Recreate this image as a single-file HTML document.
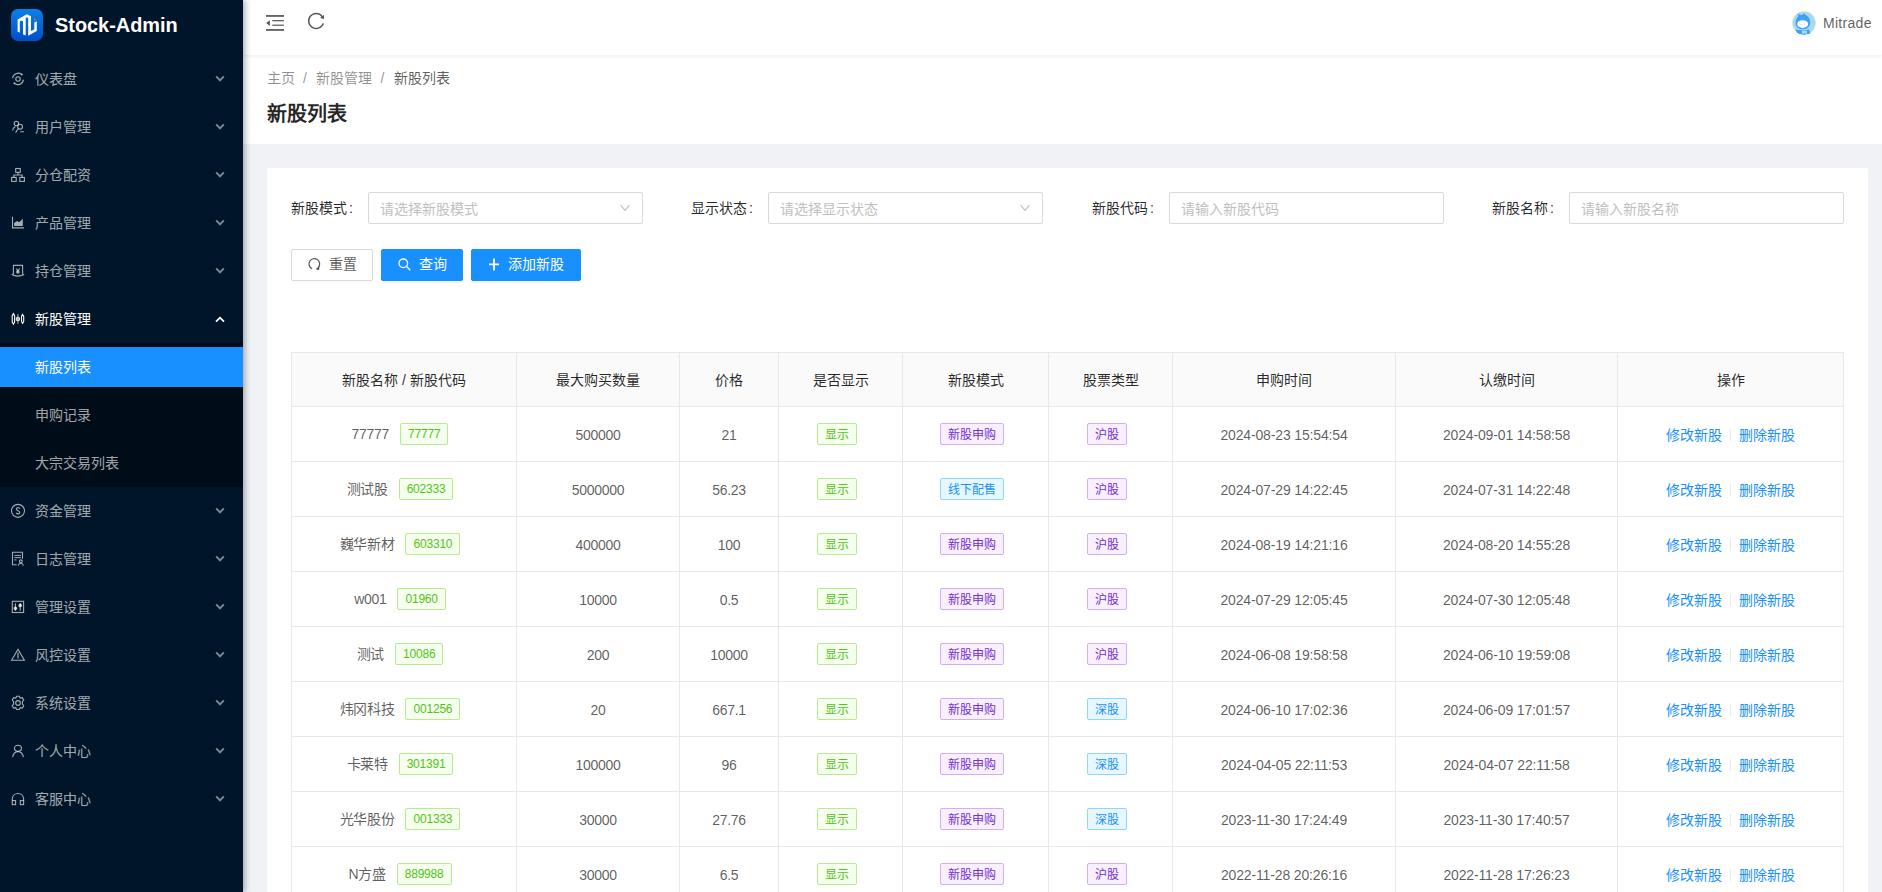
<!DOCTYPE html>
<html lang="zh-CN"><head><meta charset="utf-8"><title>新股列表</title>
<style>
*{box-sizing:border-box;margin:0;padding:0}
html,body{width:1882px;height:892px;overflow:hidden;background:#f0f2f5;font-family:"Liberation Sans",sans-serif;font-size:14px;color:rgba(0,0,0,.65)}
ul{list-style:none}
#side{position:absolute;left:0;top:0;width:243px;height:892px;background:#001529;z-index:3;box-shadow:2px 0 6px rgba(0,21,41,.35)}
.logo{position:absolute;left:11px;top:9px;width:32px;height:32px;border-radius:7px;background:linear-gradient(180deg,#0a80e8,#0050c6)}
.logo svg{position:absolute;left:0;top:0}
.brand{position:absolute;left:55px;top:13px;font-size:19.9px;font-weight:bold;color:#fff;line-height:24px}
#menu{position:absolute;left:0;top:55px;width:243px}
.mi{position:relative;height:48px;color:rgba(255,255,255,.65);line-height:48px}
.mi.open{color:#fff}
.mi .ic{position:absolute;left:8px;top:13px}
.mi .tx{position:absolute;left:35px;top:0}
.mi .arr{position:absolute;left:215px;top:20px;color:rgba(255,255,255,.5)}
.mi.open .arr{color:#fff;top:21px}
.sub{background:#000c17;padding-top:4px;height:144px}
.si{height:40px;line-height:40px;padding-left:35px;color:rgba(255,255,255,.65);margin-bottom:8px}
.si.sel{background:#1890ff;color:#fff}
#head{position:absolute;left:243px;top:0;width:1639px;height:55px;background:#fff;box-shadow:0 1px 4px rgba(0,21,41,.08);z-index:2}
#head .fold{position:absolute;left:20px;top:10px}
#head .reload{position:absolute;left:63px;top:11px}
.avatar{position:absolute;left:1549px;top:11px;width:24px;height:24px;border-radius:50%;overflow:hidden}
.uname{position:absolute;left:1580px;top:14px;font-size:14px;line-height:18px;color:rgba(0,0,0,.65);letter-spacing:.3px}
#ph{position:absolute;left:243px;top:55px;width:1639px;height:89px;background:#fff;z-index:1}
.bc{position:absolute;left:24px;top:13px;line-height:20px;color:rgba(0,0,0,.45)}
.bc .sep{margin:0 9.5px 0 8px}
.bc .last{color:rgba(0,0,0,.65)}
.ttl{position:absolute;left:24px;top:45px;font-size:20px;font-weight:bold;line-height:28px;color:rgba(0,0,0,.85)}
#card{position:absolute;left:267px;top:168px;width:1601px;height:760px;background:#fff;border-radius:2px}
.frow{position:absolute;left:0;top:24px;width:1601px;height:32px}
.fcol{position:absolute;top:0;width:400px;height:32px}
.flab{position:absolute;left:24px;top:0;line-height:32px;color:rgba(0,0,0,.85)}
.flab b{font-weight:normal;margin-left:2px}
.fin{position:absolute;left:101px;top:0;width:275px;height:32px;border:1px solid #d9d9d9;border-radius:2px;line-height:30px;padding-left:11px;padding-top:1px;color:#bfbfbf}
.fin svg{position:absolute;right:12px;top:11px}
.btns{position:absolute;left:24px;top:81px;height:32px}
.btn{position:absolute;top:0;height:32px;border-radius:2px;line-height:30px;font-size:14px}
.btn svg{position:absolute}
.btn span{position:absolute;top:-1px}
.b1{left:0;width:82px;border:1px solid #d9d9d9;color:rgba(0,0,0,.65);box-shadow:0 2px 0 rgba(0,0,0,.015)}
.b2{left:90px;width:82px;background:#1890ff;border:1px solid #1890ff;color:#fff;box-shadow:0 2px 0 rgba(0,0,0,.045)}
.b3{left:180px;width:110px;background:#1890ff;border:1px solid #1890ff;color:#fff;box-shadow:0 2px 0 rgba(0,0,0,.045)}
table{position:absolute;left:24px;top:184px;border-collapse:collapse;table-layout:fixed;width:1553px}
th,td{border:1px solid #e8e8e8;text-align:center;font-weight:normal}
th{height:54px;background:#fafafa;color:rgba(0,0,0,.85);padding-bottom:2px}
td{height:55px;color:rgba(0,0,0,.65);padding:0}
.c{display:flex;align-items:center;justify-content:center;height:54px;line-height:22px}
.c.n{padding-top:2px;letter-spacing:-.3px}
.c.t{letter-spacing:-.15px}
.c.l{padding-top:2px}
.nm{letter-spacing:-.3px}
.tag.d{letter-spacing:-.2px}
.tag.z{padding-top:1px}
.nm{margin-right:11px}
.tag{position:relative;display:inline-block;margin-right:8px;height:22px;line-height:20px;padding:0 7px;border:1px solid;border-radius:2px;font-size:12px;vertical-align:middle}
.tag.g{color:#52c41a;background:#f6ffed;border-color:#b7eb8f}
.tag.p{color:#722ed1;background:#f9f0ff;border-color:#d3adf7}
.tag.b{color:#1890ff;background:#e6f7ff;border-color:#91d5ff}
td a{color:#1890ff}
.dv{display:inline-block;width:1px;height:12px;background:#e8e8e8;margin:0 8px}
</style></head><body>
<div id="side">
 <div class="logo"><svg width="32" height="32" viewBox="0 0 32 32"><path d="M6.6 10.6L15.8 5.3L20 7.3V22L23.3 20.3V13.4L25.8 12.2V21.9L17.2 26.7V8.9L15.8 8.3L14.7 8.9V26.5L12 25.2V12.2L10.6 11.5L8.8 12.5V23.8L6.6 22.6Z" fill="#fff"/><path d="M23 9.3L25.2 10.4L23.1 11.8Z" fill="#f26b21"/></svg></div>
 <div class="brand">Stock-Admin</div>
 <ul id="menu">
<li class="mi"><svg class="ic" width="22" height="20" viewBox="0 0 22 20" fill="none" stroke="currentColor" stroke-width="1.1"><path d="M4.6 10.2A5.6 5.6 0 0 1 13.6 6.4"/><path d="M15.4 11.6A5.6 5.6 0 0 1 6.4 15.4"/><circle cx="10" cy="11" r="2.2"/><circle cx="13.8" cy="6.6" r="1" fill="currentColor" stroke="none"/><circle cx="6.4" cy="15.2" r="1" fill="currentColor" stroke="none"/></svg><span class="tx">仪表盘</span><svg class="arr" width="10" height="8" viewBox="0 0 10 8" fill="none" stroke="currentColor" stroke-width="1.9"><path d="M1.2 1.4L5 5.4L8.8 1.4"/></svg></li>
<li class="mi"><svg class="ic" width="22" height="20" viewBox="0 0 22 20" fill="none" stroke="currentColor" stroke-width="1.1"><circle cx="8.4" cy="7.5" r="2.2"/><path d="M4.5 14.5C4.9 12.6 6 11.4 7.4 10.6"/><circle cx="12.1" cy="10.7" r="2.4"/><path d="M10.3 12.5L7.6 16.6M12.2 15.7H16"/></svg><span class="tx">用户管理</span><svg class="arr" width="10" height="8" viewBox="0 0 10 8" fill="none" stroke="currentColor" stroke-width="1.9"><path d="M1.2 1.4L5 5.4L8.8 1.4"/></svg></li>
<li class="mi"><svg class="ic" width="22" height="20" viewBox="0 0 22 20" fill="none" stroke="currentColor" stroke-width="1.1"><rect x="7.7" y="4.5" width="4.6" height="3.8"/><rect x="3.6" y="13.4" width="4.6" height="4"/><rect x="11.8" y="13.4" width="4.6" height="4"/><path d="M10 8.3V11M5.9 13.4V11H14.1V13.4"/></svg><span class="tx">分仓配资</span><svg class="arr" width="10" height="8" viewBox="0 0 10 8" fill="none" stroke="currentColor" stroke-width="1.9"><path d="M1.2 1.4L5 5.4L8.8 1.4"/></svg></li>
<li class="mi"><svg class="ic" width="22" height="20" viewBox="0 0 22 20" fill="none" stroke="currentColor" stroke-width="1.1"><path d="M4.5 4.8V15.9H16"/><path d="M6.1 11L9.2 9L11.2 10.3L14.8 6.7V13.9H6.1Z" fill="currentColor" stroke="none"/></svg><span class="tx">产品管理</span><svg class="arr" width="10" height="8" viewBox="0 0 10 8" fill="none" stroke="currentColor" stroke-width="1.9"><path d="M1.2 1.4L5 5.4L8.8 1.4"/></svg></li>
<li class="mi"><svg class="ic" width="22" height="20" viewBox="0 0 22 20" fill="none" stroke="currentColor" stroke-width="1.1"><path d="M5.4 14.3V5.4H14.6V14.3"/><path d="M3.8 14.6L5.4 14.3M14.6 14.3L16.1 14.6M3.8 14.6Q9.6 17.6 16.1 14.6"/><circle cx="9.9" cy="11.9" r="1.8" fill="currentColor" stroke="none"/><path d="M8.3 8.5L9.9 10.8L11.7 8.5"/></svg><span class="tx">持仓管理</span><svg class="arr" width="10" height="8" viewBox="0 0 10 8" fill="none" stroke="currentColor" stroke-width="1.9"><path d="M1.2 1.4L5 5.4L8.8 1.4"/></svg></li>
<li class="mi open"><svg class="ic" width="22" height="20" viewBox="0 0 22 20" fill="none" stroke="currentColor" stroke-width="1.1"><path d="M5.4 5.6L6.6 7.6V14L5.4 16.2L4.2 14V7.6Z"/><path d="M9.9 6.2V15.8" stroke="#999" stroke-width="1.3"/><circle cx="9.9" cy="11" r="1.7" fill="#bbb" stroke="#ddd"/><path d="M14.6 6.4L15.7 8.4V13.4L14.6 15.4L13.5 13.4V8.4Z"/></svg><span class="tx">新股管理</span><svg class="arr" width="10" height="7" viewBox="0 0 10 7" fill="none" stroke="currentColor" stroke-width="1.8"><path d="M1 5.7l4-4 4 4"/></svg></li>
<li class="sub"><div class="si sel">新股列表</div><div class="si">申购记录</div><div class="si">大宗交易列表</div></li>
<li class="mi"><svg class="ic" width="22" height="20" viewBox="0 0 22 20" fill="none" stroke="currentColor" stroke-width="1.1"><circle cx="10" cy="10.85" r="6.5"/><path d="M11.8 8.8C11.5 8 10.8 7.7 10 7.7C9 7.7 8.3 8.3 8.3 9.1C8.3 10.9 11.8 10.4 11.8 12.4C11.8 13.3 11 13.9 10 13.9C9.1 13.9 8.4 13.5 8.1 12.8M10 6.9V7.7M10 13.9V14.8"/></svg><span class="tx">资金管理</span><svg class="arr" width="10" height="8" viewBox="0 0 10 8" fill="none" stroke="currentColor" stroke-width="1.9"><path d="M1.2 1.4L5 5.4L8.8 1.4"/></svg></li>
<li class="mi"><svg class="ic" width="22" height="20" viewBox="0 0 22 20" fill="none" stroke="currentColor" stroke-width="1.1"><path d="M8.7 16.8H4.5V4.3H14.5V10.8"/><path d="M6.4 7.4H13M6.4 9.6H13M6.4 11.9H8.5" stroke-width="1"/><circle cx="12.8" cy="13.3" r="1.4"/><path d="M10.2 17.6C10.6 16 11.6 15.3 12.8 15.3S15 16 15.4 17.6"/></svg><span class="tx">日志管理</span><svg class="arr" width="10" height="8" viewBox="0 0 10 8" fill="none" stroke="currentColor" stroke-width="1.9"><path d="M1.2 1.4L5 5.4L8.8 1.4"/></svg></li>
<li class="mi"><svg class="ic" width="22" height="20" viewBox="0 0 22 20" fill="none" stroke="currentColor" stroke-width="1.1"><rect x="4.3" y="5.3" width="11.3" height="11.2"/><path d="M7.4 7.2V14.8M12.2 7.2V14.8"/><circle cx="7.4" cy="12.3" r="1.3" fill="currentColor"/><circle cx="12.2" cy="9.4" r="1.3" fill="currentColor"/></svg><span class="tx">管理设置</span><svg class="arr" width="10" height="8" viewBox="0 0 10 8" fill="none" stroke="currentColor" stroke-width="1.9"><path d="M1.2 1.4L5 5.4L8.8 1.4"/></svg></li>
<li class="mi"><svg class="ic" width="22" height="20" viewBox="0 0 22 20" fill="none" stroke="currentColor" stroke-width="1.1"><path d="M10 5.3L16.4 16.3H3.6Z"/><path d="M10 8.4V14.4" stroke-width="1.2"/></svg><span class="tx">风控设置</span><svg class="arr" width="10" height="8" viewBox="0 0 10 8" fill="none" stroke="currentColor" stroke-width="1.9"><path d="M1.2 1.4L5 5.4L8.8 1.4"/></svg></li>
<li class="mi"><svg class="ic" width="22" height="20" viewBox="0 0 22 20" fill="none" stroke="currentColor" stroke-width="1.1"><path d="M8.6 4.2H11.4L12.2 6.1L14.3 5.6L15.8 8L14.4 9.6L14.4 12.1L15.8 13.7L14.3 16.1L12.2 15.6L11.4 17.5H8.6L7.8 15.6L5.7 16.1L4.2 13.7L5.6 12.1V9.6L4.2 8L5.7 5.6L7.8 6.1Z"/><circle cx="10" cy="10.9" r="2.3"/></svg><span class="tx">系统设置</span><svg class="arr" width="10" height="8" viewBox="0 0 10 8" fill="none" stroke="currentColor" stroke-width="1.9"><path d="M1.2 1.4L5 5.4L8.8 1.4"/></svg></li>
<li class="mi"><svg class="ic" width="22" height="20" viewBox="0 0 22 20" fill="none" stroke="currentColor" stroke-width="1.1"><ellipse cx="9.95" cy="8.2" rx="3.5" ry="3"/><path d="M4.6 17.2C5.2 13.8 7.2 11.6 10 11.6S14.8 13.8 15.4 17.2"/></svg><span class="tx">个人中心</span><svg class="arr" width="10" height="8" viewBox="0 0 10 8" fill="none" stroke="currentColor" stroke-width="1.9"><path d="M1.2 1.4L5 5.4L8.8 1.4"/></svg></li>
<li class="mi"><svg class="ic" width="22" height="20" viewBox="0 0 22 20" fill="none" stroke="currentColor" stroke-width="1.1"><path d="M4.3 12.5V10.5A5.7 5.7 0 0 1 15.6 10.5V12.5"/><rect x="4.3" y="12.6" width="3.3" height="4"/><rect x="12.3" y="12.6" width="3.3" height="4"/></svg><span class="tx">客服中心</span><svg class="arr" width="10" height="8" viewBox="0 0 10 8" fill="none" stroke="currentColor" stroke-width="1.9"><path d="M1.2 1.4L5 5.4L8.8 1.4"/></svg></li>
 </ul>
</div>
<div id="head">
 <svg class="fold" width="24" height="24" viewBox="0 0 24 24" fill="#555"><rect x="3" y="5.1" width="18" height="1.7"/><rect x="9.3" y="10.1" width="11.6" height="1.2"/><rect x="9.3" y="14.6" width="11.6" height="1.2"/><rect x="3" y="19.1" width="18" height="1.7"/><path d="M3.2 13.05L6.8 10.2V15.9Z"/></svg>
 <svg class="reload" width="20" height="20" viewBox="0 0 1024 1024" fill="#555"><path d="M909.1 209.3l-56.4 44.1C775.8 155.1 656.2 92 521.9 92 290 92 102.3 279.5 102 511.5 101.7 743.7 289.8 932 521.9 932c181.3 0 335.8-115 394.6-276.1 1.5-4.2-.7-8.9-4.9-10.3l-56.7-19.5a8 8 0 00-10.1 4.8c-1.8 5-3.8 10-5.9 14.9-17.3 41-42.1 77.8-73.7 109.4A344.77 344.77 0 01655.9 829c-42.3 17.9-87.4 27-133.8 27-46.5 0-91.5-9.1-133.8-27A341.5 341.5 0 01279 755.2a342.16 342.16 0 01-73.7-109.4c-17.9-42.4-27-87.4-27-133.9s9.1-91.5 27-133.9c17.3-41 42.1-77.8 73.7-109.4 31.6-31.6 68.4-56.4 109.3-73.8 42.3-17.9 87.4-27 133.8-27 46.5 0 91.5 9.1 133.8 27a341.5 341.5 0 01109.3 73.8c9.9 9.9 19.2 20.4 27.8 31.4l-60.2 47a8 8 0 003 14.1l175.6 43c5 1.2 9.9-2.6 9.9-7.7l.8-180.9c-.1-6.6-7.8-10.3-13-6.2z"/></svg>
 <div class="avatar"><svg width="24" height="24" viewBox="0 0 24 24"><circle cx="12" cy="12" r="11.7" fill="#a6d8fc" stroke="#eef27a" stroke-width=".7"/><path d="M4 12.5C4 8.5 5.5 5.8 7 5.2L6.3 3.3L8.6 4.6C9.6 4.2 10.6 4 11.5 4L11.9 2.7L13 4.3C16 5 17.8 8 17.8 11.5C17.8 15.5 15 17.8 11 17.8C6.8 17.8 4 15.8 4 12.5Z" fill="#3aa6f3" stroke="#2a7fd8" stroke-width=".5"/><ellipse cx="10.65" cy="13.05" rx="5.5" ry="3.9" fill="#fff"/><path d="M8.3 13.2h.8M12.2 13h.8M10.3 14.2h.6" stroke="#7fa6d8" stroke-width=".6"/><path d="M3.5 18.5C6 19 9 19.3 12 19.2L17 18.5L18.5 22.5C16 24 8 24.3 5 22Z" fill="#3aa6f3"/><rect x="10" y="19.6" width="5" height="3" fill="#a6d8fc"/></svg></div>
 <div class="uname">Mitrade</div>
</div>
<div id="ph">
 <div class="bc"><span>主页</span><span class="sep">/</span><span>新股管理</span><span class="sep">/</span><span class="last">新股列表</span></div>
 <div class="ttl">新股列表</div>
</div>
<div id="card">
 <div class="frow">
  <div class="fcol" style="left:0"><span class="flab">新股模式<b>:</b></span><div class="fin">请选择新股模式<svg width="10" height="8" viewBox="0 0 10 8" fill="none" stroke="#bfbfbf" stroke-width="1.2"><path d="M.6 1.2L5 6.4L9.4 1.2"/></svg></div></div>
  <div class="fcol" style="left:400px"><span class="flab">显示状态<b>:</b></span><div class="fin">请选择显示状态<svg width="10" height="8" viewBox="0 0 10 8" fill="none" stroke="#bfbfbf" stroke-width="1.2"><path d="M.6 1.2L5 6.4L9.4 1.2"/></svg></div></div>
  <div class="fcol" style="left:801px"><span class="flab">新股代码<b>:</b></span><div class="fin">请输入新股代码</div></div>
  <div class="fcol" style="left:1201px"><span class="flab">新股名称<b>:</b></span><div class="fin">请输入新股名称</div></div>
 </div>
 <div class="btns">
  <div class="btn b1"><svg style="left:16px;top:7px" width="13" height="13" viewBox="0 0 13 13" fill="none" stroke="#555" stroke-width="1.2"><path d="M10.5 10.2A5.3 5.3 0 1 0 4 11.7"/><path d="M8.8 11.9l2-1.7-.3 2.3z" fill="#555"/></svg><span style="left:37px">重置</span></div>
  <div class="btn b2"><svg style="left:16px;top:8px" width="13" height="13" viewBox="0 0 13 13" fill="none" stroke="#fff" stroke-width="1.3"><circle cx="5.3" cy="5.3" r="4.3"/><path d="M8.5 8.5l3.8 3.8"/></svg><span style="left:37px">查询</span></div>
  <div class="btn b3"><svg style="left:16px;top:8px" width="12" height="13" viewBox="0 0 12 13" fill="none" stroke="#fff" stroke-width="1.8"><path d="M6 .6v11.8M1 6.4h10"/></svg><span style="left:36px">添加新股</span></div>
 </div>
 <table>
  <colgroup><col style="width:225px"><col style="width:163px"><col style="width:99px"><col style="width:124px"><col style="width:146px"><col style="width:124px"><col style="width:223px"><col style="width:222px"><col style="width:226px"></colgroup>
  <tr><th>新股名称 / 新股代码</th><th>最大购买数量</th><th>价格</th><th>是否显示</th><th>新股模式</th><th>股票类型</th><th>申购时间</th><th>认缴时间</th><th>操作</th></tr>
<tr><td><div class="c"><span class="nm">77777</span><span class="tag g d">77777</span></div></td><td><div class="c n">500000</div></td><td><div class="c n">21</div></td><td><div class="c"><span class="tag g z">显示</span></div></td><td><div class="c"><span class="tag p z">新股申购</span></div></td><td><div class="c"><span class="tag p z">沪股</span></div></td><td><div class="c n t">2024-08-23 15:54:54</div></td><td><div class="c n t">2024-09-01 14:58:58</div></td><td><div class="c l"><a>修改新股</a><i class="dv"></i><a>删除新股</a></div></td></tr>
<tr><td><div class="c"><span class="nm">测试股</span><span class="tag g d">602333</span></div></td><td><div class="c n">5000000</div></td><td><div class="c n">56.23</div></td><td><div class="c"><span class="tag g z">显示</span></div></td><td><div class="c"><span class="tag b z">线下配售</span></div></td><td><div class="c"><span class="tag p z">沪股</span></div></td><td><div class="c n t">2024-07-29 14:22:45</div></td><td><div class="c n t">2024-07-31 14:22:48</div></td><td><div class="c l"><a>修改新股</a><i class="dv"></i><a>删除新股</a></div></td></tr>
<tr><td><div class="c"><span class="nm">巍华新材</span><span class="tag g d">603310</span></div></td><td><div class="c n">400000</div></td><td><div class="c n">100</div></td><td><div class="c"><span class="tag g z">显示</span></div></td><td><div class="c"><span class="tag p z">新股申购</span></div></td><td><div class="c"><span class="tag p z">沪股</span></div></td><td><div class="c n t">2024-08-19 14:21:16</div></td><td><div class="c n t">2024-08-20 14:55:28</div></td><td><div class="c l"><a>修改新股</a><i class="dv"></i><a>删除新股</a></div></td></tr>
<tr><td><div class="c"><span class="nm">w001</span><span class="tag g d">01960</span></div></td><td><div class="c n">10000</div></td><td><div class="c n">0.5</div></td><td><div class="c"><span class="tag g z">显示</span></div></td><td><div class="c"><span class="tag p z">新股申购</span></div></td><td><div class="c"><span class="tag p z">沪股</span></div></td><td><div class="c n t">2024-07-29 12:05:45</div></td><td><div class="c n t">2024-07-30 12:05:48</div></td><td><div class="c l"><a>修改新股</a><i class="dv"></i><a>删除新股</a></div></td></tr>
<tr><td><div class="c"><span class="nm">测试</span><span class="tag g d">10086</span></div></td><td><div class="c n">200</div></td><td><div class="c n">10000</div></td><td><div class="c"><span class="tag g z">显示</span></div></td><td><div class="c"><span class="tag p z">新股申购</span></div></td><td><div class="c"><span class="tag p z">沪股</span></div></td><td><div class="c n t">2024-06-08 19:58:58</div></td><td><div class="c n t">2024-06-10 19:59:08</div></td><td><div class="c l"><a>修改新股</a><i class="dv"></i><a>删除新股</a></div></td></tr>
<tr><td><div class="c"><span class="nm">炜冈科技</span><span class="tag g d">001256</span></div></td><td><div class="c n">20</div></td><td><div class="c n">667.1</div></td><td><div class="c"><span class="tag g z">显示</span></div></td><td><div class="c"><span class="tag p z">新股申购</span></div></td><td><div class="c"><span class="tag b z">深股</span></div></td><td><div class="c n t">2024-06-10 17:02:36</div></td><td><div class="c n t">2024-06-09 17:01:57</div></td><td><div class="c l"><a>修改新股</a><i class="dv"></i><a>删除新股</a></div></td></tr>
<tr><td><div class="c"><span class="nm">卡莱特</span><span class="tag g d">301391</span></div></td><td><div class="c n">100000</div></td><td><div class="c n">96</div></td><td><div class="c"><span class="tag g z">显示</span></div></td><td><div class="c"><span class="tag p z">新股申购</span></div></td><td><div class="c"><span class="tag b z">深股</span></div></td><td><div class="c n t">2024-04-05 22:11:53</div></td><td><div class="c n t">2024-04-07 22:11:58</div></td><td><div class="c l"><a>修改新股</a><i class="dv"></i><a>删除新股</a></div></td></tr>
<tr><td><div class="c"><span class="nm">光华股份</span><span class="tag g d">001333</span></div></td><td><div class="c n">30000</div></td><td><div class="c n">27.76</div></td><td><div class="c"><span class="tag g z">显示</span></div></td><td><div class="c"><span class="tag p z">新股申购</span></div></td><td><div class="c"><span class="tag b z">深股</span></div></td><td><div class="c n t">2023-11-30 17:24:49</div></td><td><div class="c n t">2023-11-30 17:40:57</div></td><td><div class="c l"><a>修改新股</a><i class="dv"></i><a>删除新股</a></div></td></tr>
<tr><td><div class="c"><span class="nm">N方盛</span><span class="tag g d">889988</span></div></td><td><div class="c n">30000</div></td><td><div class="c n">6.5</div></td><td><div class="c"><span class="tag g z">显示</span></div></td><td><div class="c"><span class="tag p z">新股申购</span></div></td><td><div class="c"><span class="tag p z">沪股</span></div></td><td><div class="c n t">2022-11-28 20:26:16</div></td><td><div class="c n t">2022-11-28 17:26:23</div></td><td><div class="c l"><a>修改新股</a><i class="dv"></i><a>删除新股</a></div></td></tr>
 </table>
</div>
</body></html>
